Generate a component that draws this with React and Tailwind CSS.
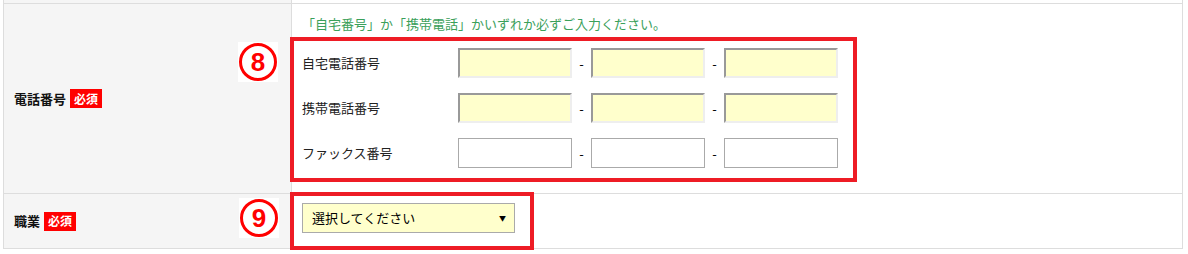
const FONT = { fontFamily: '"Noto Sans CJK JP", "Liberation Sans", sans-serif' };

const Required = () => (
  <span className="ml-[4px] inline-flex h-[19px] items-center bg-[#ff0000] px-[4px] text-[12px] font-bold leading-none text-white">
    必須
  </span>
);

const Marker = ({ num, className = '' }) => (
  <div className={`absolute flex h-[40px] w-[40px] items-center justify-center bg-white ${className}`}>
    <div
      className="flex h-[38px] w-[38px] items-center justify-center rounded-full border-[3px] border-[#ff0000] text-[26px] font-bold leading-none text-[#ff0000]"
      style={{ fontFamily: '"Liberation Sans", Arial, sans-serif' }}
    >
      {num}
    </div>
  </div>
);

const YellowInput = () => (
  <div className="h-[30px] w-[114px] border-2 border-t-[#999] border-l-[#999] border-r-[#eee] border-b-[#eee] bg-[#ffffcc]" />
);

const WhiteInput = () => (
  <div className="h-[30px] w-[114px] border border-[#aaa] bg-white" />
);

const Dash = () => (
  <span className="flex w-[19px] justify-center text-[13px] leading-none text-black">-</span>
);

const PhoneRow = ({ label, filled }) => {
  const Input = filled ? YellowInput : WhiteInput;
  return (
    <div className="flex h-[30px] items-center">
      <span className="w-[156px] text-[13px] text-[#222]">{label}</span>
      <Input />
      <Dash />
      <Input />
      <Dash />
      <Input />
    </div>
  );
};

export default function App() {
  return (
    <div className="h-[254px] w-[1188px] bg-white pl-[3px]" style={FONT}>
      <div className="w-[1180px]">
        {/* tail of previous row */}
        <div className="flex h-[3px] border-x border-[#dddddd]">
          <div className="w-[288px] border-r border-[#dddddd] bg-[#f5f5f5]" />
          <div className="flex-1" />
        </div>

        {/* phone row */}
        <div className="relative flex border border-b-0 border-[#dddddd]">
          <div className="flex w-[288px] items-center border-r border-[#dddddd] bg-[#f5f5f5] pl-[10px]">
            <span className="text-[13px] font-bold text-[#111]">電話番号</span>
            <Required />
          </div>
          <div className="flex-1 pb-[25px] pl-[10px] pt-[10px]">
            <p className="h-[20px] text-[13px] leading-[20px] text-[#3aa05a]">
              「自宅番号」か「携帯電話」かいずれか必ずご入力ください。
            </p>
            <div className="mt-[14px] flex flex-col gap-[15px]">
              <PhoneRow label="自宅電話番号" filled />
              <PhoneRow label="携帯電話番号" filled />
              <PhoneRow label="ファックス番号" />
            </div>
          </div>
          <Marker num="8" className="left-[234px] top-[38px]" />
          <div className="pointer-events-none absolute left-[286px] top-[33px] h-[145px] w-[567px] border-4 border-[#ee1c25]" />
        </div>

        {/* job row */}
        <div className="relative flex border border-[#dddddd]">
          <div className="flex w-[288px] items-center border-r border-[#dddddd] bg-[#f5f5f5] pl-[10px]">
            <span className="text-[13px] font-bold text-[#111]">職業</span>
            <Required />
          </div>
          <div className="flex-1 pb-[15px] pl-[10px] pt-[9px]">
            <div className="flex h-[30px] w-[213px] items-center justify-between border border-[#aaa] bg-[#ffffcc] pl-[9px] pr-[8px]">
              <span className="text-[13px] text-black">選択してください</span>
              <span className="text-[7px] leading-none text-black">▼</span>
            </div>
          </div>
          <Marker num="9" className="left-[235px] top-[4px]" />
          <div className="pointer-events-none absolute left-[286px] top-[-2px] h-[58px] w-[244px] border-4 border-[#ee1c25]" />
        </div>
      </div>
    </div>
  );
}
